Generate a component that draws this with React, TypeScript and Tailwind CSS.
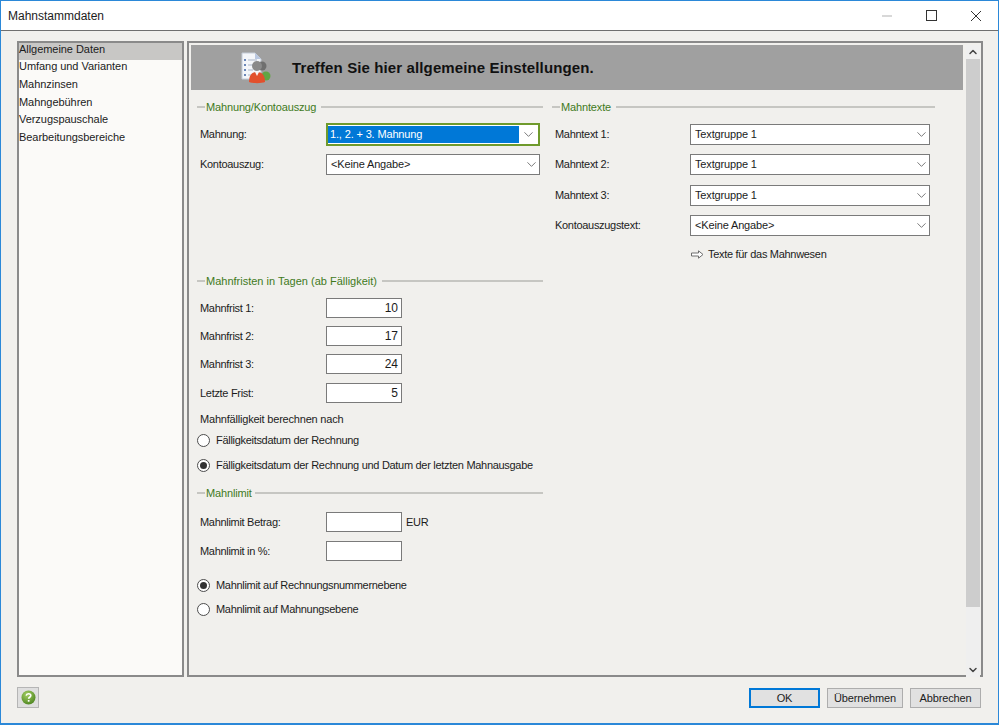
import { ChevronDown, ChevronUp } from "lucide-react";

const navItems = [
  "Allgemeine Daten",
  "Umfang und Varianten",
  "Mahnzinsen",
  "Mahngebühren",
  "Verzugspauschale",
  "Bearbeitungsbereiche",
];

function Legend({
  title,
  className,
  titleClass = "tracking-[-0.15px]",
  lineClass = "ml-1",
}: {
  title: string;
  className: string;
  titleClass?: string;
  lineClass?: string;
}) {
  return (
    <div className={`flex h-4 items-center ${className}`}>
      <div className="h-0.5 w-2 bg-[#c6c6c2]" />
      <span className={`px-px text-[#3f7a1c] ${titleClass}`}>{title}</span>
      <div className={`h-0.5 flex-1 bg-[#c6c6c2] ${lineClass}`} />
    </div>
  );
}

function Select({ value, focused }: { value: string; focused?: boolean }) {
  return (
    <div
      className={`relative flex items-center bg-white tracking-[-0.15px] ${
        focused ? "h-[23px] border-2 border-[#6f9a2c]" : "h-[21px] border border-[#7a7a7a] pl-1"
      }`}
    >
      <span
        className={
          focused
            ? "flex h-[17px] w-[191px] items-center bg-[#0078d7] pb-0.5 pl-0.5 text-white"
            : "pb-0.5"
        }
      >
        {value}
      </span>
      <ChevronDown
        className={`absolute size-[15px] text-[#555555] ${focused ? "right-[2px]" : "right-0"}`}
        strokeWidth={1.25}
      />
    </div>
  );
}

function SelectRow({
  label,
  value,
  focused,
  width,
  className,
}: {
  label: string;
  value: string;
  focused?: boolean;
  width: string;
  className: string;
}) {
  return (
    <div className={`flex items-center ${className}`}>
      <span className={`shrink-0 pb-0.5 ${width}`}>{label}</span>
      <div className="flex-1">
        <Select value={value} focused={focused} />
      </div>
    </div>
  );
}

function NumberRow({
  label,
  value,
  suffix,
  className,
}: {
  label: string;
  value?: string;
  suffix?: string;
  className: string;
}) {
  return (
    <div className={`flex h-5 items-center ${className}`}>
      <span className="w-[126px] shrink-0">{label}</span>
      <div className="flex h-5 w-[76px] items-center justify-end border border-[#7a7a7a] bg-white pr-[3px] text-[12px] tracking-normal">
        {value}
      </div>
      {suffix && <span className="ml-1">{suffix}</span>}
    </div>
  );
}

function Radio({
  label,
  checked,
  className,
}: {
  label: string;
  checked?: boolean;
  className: string;
}) {
  return (
    <div className={`-ml-[3px] flex h-4 items-center whitespace-nowrap ${className}`}>
      <div className="flex size-[13px] items-center justify-center rounded-full border border-[#4d4d4d] bg-white">
        {checked && <div className="size-[7px] rounded-full bg-[#333333]" />}
      </div>
      <span className="ml-1.5">{label}</span>
    </div>
  );
}

function HeaderIcon() {
  return (
    <svg width="32" height="32" viewBox="0 0 32 32" className="shrink-0">
      <path d="M2 1h13l6 6v20H2z" fill="#f4f6fa" stroke="#c4ccd8" />
      <path d="M15 1l6 6h-6z" fill="#b9c7e0" />
      <g fill="#6a86b8">
        <rect x="4" y="7" width="2" height="2" />
        <rect x="4" y="12" width="2" height="2" />
        <rect x="4" y="17" width="2" height="2" />
        <rect x="4" y="22" width="2" height="2" />
      </g>
      <g stroke="#a9b4c6">
        <path d="M8 8h9M8 13h6M8 18h5M8 23h4" />
      </g>
      <circle cx="22" cy="14" r="4.5" fill="#6f6f6f" />
      <circle cx="26" cy="24" r="4.5" fill="#62a544" />
      <circle cx="17" cy="14" r="5" fill="#8a8a8a" />
      <path d="M9 30c0-7 3-10 8-10s8 3 8 10c-3 1.500-13 1.500-16 0z" fill="#e2502c" />
      <path d="M15 20h4l-2 4z" fill="#f5f5f5" />
    </svg>
  );
}

function HelpIcon() {
  return (
    <svg width="15" height="15" viewBox="0 0 15 15">
      <defs>
        <radialGradient id="help" cx="40%" cy="30%" r="75%">
          <stop offset="0%" stopColor="#a4cf62" />
          <stop offset="100%" stopColor="#4c8420" />
        </radialGradient>
      </defs>
      <circle cx="7.500" cy="7.500" r="7" fill="url(#help)" />
      <path
        d="M5.200 5.600c.2-1.300 1.100-1.900 2.300-1.900 1.400 0 2.300.8 2.300 1.900 0 1.700-2.200 1.600-2.200 3.200"
        fill="none"
        stroke="#ffffff"
        strokeWidth="1.600"
      />
      <rect x="6.800" y="10" width="1.700" height="1.700" fill="#ffffff" />
    </svg>
  );
}

export default function App() {
  return (
    <div
      className="flex h-[725px] w-[999px] flex-col overflow-hidden border border-b-2 border-[#2b88d8] bg-[#f1f0ed] text-[11px] leading-4 tracking-[-0.3px] text-[#1c1c1c]"
      style={{ fontFamily: '"Liberation Sans", Arial, sans-serif' }}
    >
      {/* title bar */}
      <div className="flex h-[30px] shrink-0 items-center border-b border-[#6f6f6f] bg-white pl-[7px]">
        <span className="flex-1 text-[12px] tracking-normal">Mahnstammdaten</span>
        <div className="mr-[34px] h-0.5 w-2.5 bg-[#d8d8d8]" />
        <svg width="11" height="11" viewBox="0 0 11 11" className="mr-[33px]">
          <rect x="0.500" y="0.500" width="10" height="10" fill="none" stroke="#333333" />
        </svg>
        <svg width="12" height="12" viewBox="0 0 12 12" className="mr-[16px]">
          <path d="M1 1l10 10M11 1L1 11" stroke="#333333" strokeWidth="1" />
        </svg>
      </div>

      {/* body */}
      <div className="flex flex-1 gap-[3px] pl-4 pr-[15px] pt-2.5">
        <div className="h-[636px] w-[167px] shrink-0 border-2 border-[#8a8a8a] bg-[#fbfaf8] tracking-[-0.05px]">
          {navItems.map((item, i) => (
            <div
              key={item}
              className={`flex items-center pb-[4px] ${
                i === 0 ? "h-[16.600px] bg-[#c8c7c5]" : "h-[17.600px]"
              }`}
            >
              {item}
            </div>
          ))}
        </div>

        <div className="flex h-[636px] flex-1 border-2 border-[#8a8a8a] pl-0.5 pt-0.5">
          <div className="flex w-[772px] shrink-0 flex-col">
            <div className="flex h-[45px] items-center bg-[#a0a0a0] pl-[49px]">
              <HeaderIcon />
              <span className="ml-[20px] text-[15px] font-bold tracking-[0.12px] text-[#111111]">
                Treffen Sie hier allgemeine Einstellungen.
              </span>
            </div>

            <div className="flex">
              <div className="flex w-[352px] shrink-0 flex-col pl-[9px]">
                <Legend title="Mahnung/Kontoauszug" className="-ml-[3px] mt-[9px]" />
                <SelectRow
                  label="Mahnung:"
                  value="1., 2. + 3. Mahnung"
                  focused
                  width="w-[126px]"
                  className="mt-2 mr-[3px]"
                />
                <SelectRow
                  label="Kontoauszug:"
                  value="<Keine Angabe>"
                  width="w-[126px]"
                  className="mt-2 mr-[3px]"
                />

                <Legend
                  title="Mahnfristen in Tagen (ab Fälligkeit)"
                  titleClass="tracking-[0px]"
                  className="-ml-[3px] mt-[98px]"
                />
                <NumberRow label="Mahnfrist 1:" value="10" className="mt-[9px]" />
                <NumberRow label="Mahnfrist 2:" value="17" className="mt-2" />
                <NumberRow label="Mahnfrist 3:" value="24" className="mt-2" />
                <NumberRow label="Letzte Frist:" value="5" className="mt-[9px]" />

                <div className="mt-[8px] tracking-[-0.2px]">Mahnfälligkeit berechnen nach</div>
                <Radio label="Fälligkeitsdatum der Rechnung" className="mt-[5px]" />
                <Radio
                  label="Fälligkeitsdatum der Rechnung und Datum der letzten Mahnausgabe"
                  checked
                  className="mt-[9px]"
                />

                <Legend title="Mahnlimit" lineClass="ml-0.5" className="-ml-[3px] mt-[12px]" />
                <NumberRow label="Mahnlimit Betrag:" suffix="EUR" className="mt-[11px]" />
                <NumberRow label="Mahnlimit in %:" className="mt-[9px]" />
                <Radio
                  label="Mahnlimit auf Rechnungsnummernebene"
                  checked
                  className="mt-4"
                />
                <Radio label="Mahnlimit auf Mahnungsebene" className="mt-2" />
              </div>

              <div className="flex w-[392px] flex-col pl-[9px]">
                <Legend title="Mahntexte" className="mt-[9px]" />
                <SelectRow
                  label="Mahntext 1:"
                  value="Textgruppe 1"
                  width="w-[135px]"
                  className="mt-[9px] ml-[3px] mr-[5px]"
                />
                <SelectRow
                  label="Mahntext 2:"
                  value="Textgruppe 1"
                  width="w-[135px]"
                  className="mt-[9px] ml-[3px] mr-[5px]"
                />
                <SelectRow
                  label="Mahntext 3:"
                  value="Textgruppe 1"
                  width="w-[135px]"
                  className="mt-2.5 ml-[3px] mr-[5px]"
                />
                <SelectRow
                  label="Kontoauszugstext:"
                  value="<Keine Angabe>"
                  width="w-[135px]"
                  className="mt-[9px] ml-[3px] mr-[5px]"
                />
                <div className="ml-[139px] mt-2.5 flex items-center gap-1">
                  <svg width="13" height="9" viewBox="0 0 13 9">
                    <path d="M0.500 3h7V0.800L12 4.500 7.500 8.200V6h-7z" fill="#ffffff" stroke="#6f6f6f" />
                  </svg>
                  <span>Texte für das Mahnwesen</span>
                </div>
              </div>
            </div>
          </div>

          {/* scrollbar */}
          <div className="ml-[3px] flex h-[632px] w-[14px] flex-col items-center bg-[#efefef]">
            <div className="flex h-[14px] items-center">
              <ChevronUp className="size-3 text-[#444444]" strokeWidth={3} />
            </div>
            <div className="h-[548px] w-full bg-[#cdcdcd]" />
            <div className="flex-1" />
            <div className="flex h-[14px] items-center">
              <ChevronDown className="size-3 text-[#444444]" strokeWidth={3} />
            </div>
          </div>
        </div>
      </div>

      {/* footer */}
      <div className="mb-[15px] flex h-[21px] shrink-0 items-center pl-4 pr-[17px] tracking-[-0.15px]">
        <div className="flex h-[21px] w-[22px] items-center justify-center border border-[#b5b5b5] bg-[#dfdfdf]">
          <HelpIcon />
        </div>
        <div className="flex-1" />
        <button className="h-[20px] w-[71px] border-2 border-[#0078d7] bg-[#e1e1e1]">OK</button>
        <button className="ml-[7px] h-[20px] w-[76px] border border-[#adadad] bg-[#e1e1e1]">
          Übernehmen
        </button>
        <button className="ml-[7px] h-[20px] w-[71px] border border-[#adadad] bg-[#e1e1e1]">
          Abbrechen
        </button>
      </div>
    </div>
  );
}
